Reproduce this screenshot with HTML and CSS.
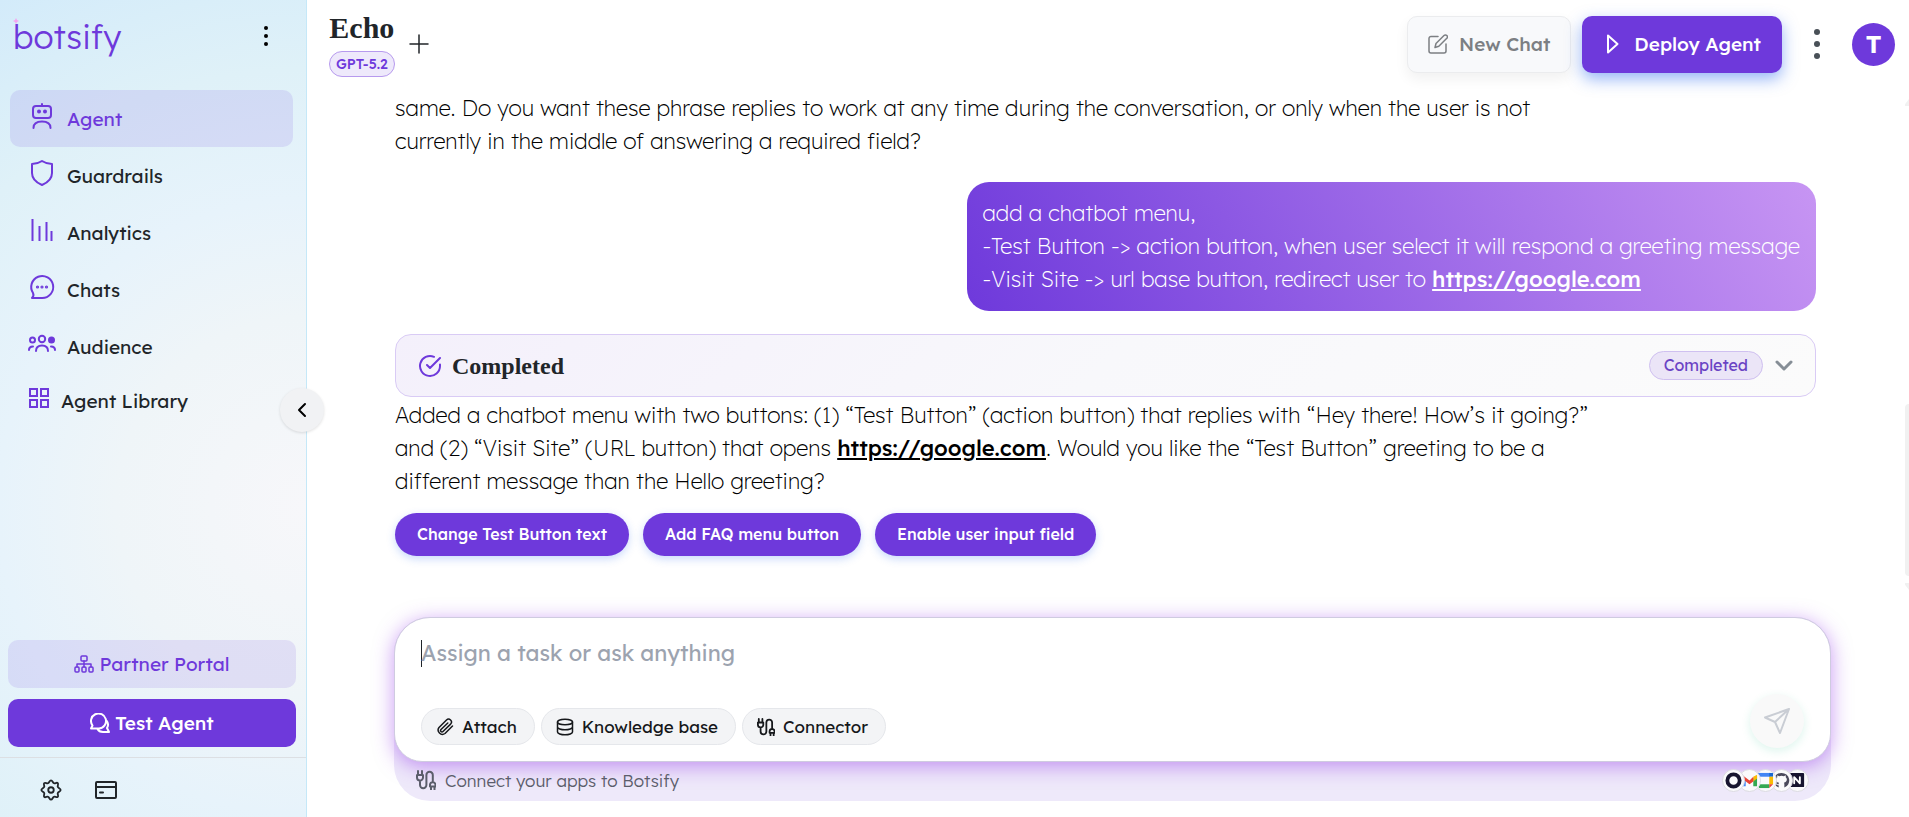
FILE: index.html
```
<!DOCTYPE html>
<html lang="en">
<head>
    <meta charset="UTF-8">
    <meta name="viewport" content="width=device-width, initial-scale=1.0">
    <title>Botsify - Echo</title>
    <link rel="stylesheet" href="styles.css">
</head>
<body>
<svg class="sprite" aria-hidden="true">
    <symbol id="plug" viewBox="0 0 20 20">
        <path d="M2 1v4M6 1v4M1 5h6v2.500a3 3 0 0 1-6 0zM4 10.500V15a3.200 3.200 0 0 0 6.400 0V5a3.200 3.200 0 0 1 6.400 0v6M14 14.500a2.800 2.800 0 0 1 5.500 0v2h-5.500zM15 17v2.500M18.500 17v2.500"/>
    </symbol>
</svg>

<aside class="sidebar">
    <div class="sidebar-top">
        <a href="#" class="logo">botsify
            <svg class="spark" viewBox="0 0 6 6"><path d="M3 0l1 2 2 1-2 1-1 2-1-2-2-1 2-1z"/></svg>
        </a>
        <button class="icon-btn" aria-label="Menu">
            <svg class="dots" width="6" height="20" viewBox="0 0 6 20"><circle cx="3" cy="2" r="2"/><circle cx="3" cy="10" r="2"/><circle cx="3" cy="18" r="2"/></svg>
        </button>
    </div>

    <nav class="nav">
        <a href="#" class="nav-link active">
            <svg width="28" height="28" viewBox="0 0 28 28"><rect x="5" y="4" width="18" height="12" rx="3"/><path d="M14 4V2M5.500 26c0-4 3-6.500 8.500-6.500s8.500 2.500 8.500 6.500"/><circle cx="11" cy="9.500" r="1" class="dot"/><circle cx="17" cy="9.500" r="1" class="dot"/></svg>
            <span>Agent</span>
        </a>
        <a href="#" class="nav-link">
            <svg width="28" height="28" viewBox="0 0 28 28"><path d="M14 2c3 2 6 3 10 3v9c0 6-4 9.500-10 12C8 23.500 4 20 4 14V5c4 0 7-1 10-3z"/></svg>
            <span>Guardrails</span>
        </a>
        <a href="#" class="nav-link">
            <svg class="bars" width="28" height="28" viewBox="0 0 28 28"><path d="M4.500 3v22M11.500 10v15M18.500 6v19M23.500 15v10"/></svg>
            <span>Analytics</span>
        </a>
        <a href="#" class="nav-link">
            <svg width="28" height="28" viewBox="0 0 28 28"><path d="M4 25c1.500-1.500 2-3 1-5A11 11 0 1 1 14 25z"/><circle cx="9.500" cy="14" r=".6" class="dot"/><circle cx="14" cy="14" r=".6" class="dot"/><circle cx="18.500" cy="14" r=".6" class="dot"/></svg>
            <span>Chats</span>
        </a>
        <a href="#" class="nav-link">
            <svg width="28" height="28" viewBox="0 0 28 28"><circle cx="14" cy="9" r="3.200"/><circle cx="4.500" cy="10" r="2.500"/><circle cx="23.500" cy="10" r="2.500" class="dot"/><path d="M8 21c0-3.500 2.500-5.500 6-5.500s6 2 6 5.500M1 20c0-2 1.500-3.500 4-3.500M27 20c0-2-1.500-3.500-4-3.500"/></svg>
            <span>Audience</span>
        </a>
        <a href="#" class="nav-link library">
            <svg class="bars" width="20" height="20" viewBox="0 0 20 20"><path d="M1 1h7v7H1zM12 1h7v7h-7zM1 12h7v7H1zM12 12h7v7h-7z"/></svg>
            <span>Agent Library</span>
        </a>
    </nav>

    <div class="sidebar-actions">
        <button class="btn-side light">
            <svg class="thin" width="20" height="18" viewBox="0 0 20 18"><rect x="7" y="1" width="6" height="5" rx="1"/><rect x="1" y="12" width="4" height="5" rx="1"/><rect x="8" y="12" width="4" height="5" rx="1"/><rect x="15" y="12" width="4" height="5" rx="1"/><path d="M10 6v6M3 12V9h14v3"/></svg>
            Partner Portal
        </button>
        <button class="btn-side solid">
            <svg width="20" height="20" viewBox="0 0 20 20"><path d="M1 15.500l1.500-3A7.500 7.500 0 1 1 9 15.500zM16.500 7.500c2 2.500 2 5 .5 7.500l2 4h-6c-2.500 0-4.500-1-5.500-3"/></svg>
            Test Agent
        </button>
    </div>
    <div class="sidebar-bottom">
        <button class="icon-btn" aria-label="Settings">
            <svg width="22" height="22" viewBox="0 0 24 24"><circle cx="12" cy="12" r="3"/><path d="M12 1.500c1.600 0 1.800 2.600 3.200 3.100s3.100-1.300 4.200-.1-.6 2.900 0 4.200 3.100 1.700 3.100 3.300-2.500 2-3.100 3.300 1.200 3.100 0 4.200-2.800-.6-4.200-.1-1.600 3.100-3.200 3.100-1.800-2.600-3.200-3.100-3.100 1.300-4.200.1.600-2.900 0-4.200-3.100-1.700-3.100-3.300 2.500-2 3.100-3.300-1.200-3.100 0-4.200 2.800.6 4.200.1S10.400 1.500 12 1.500z"/></svg>
        </button>
        <button class="icon-btn" aria-label="Billing">
            <svg width="24" height="22" viewBox="0 0 24 22"><rect x="2" y="3" width="20" height="16" rx="1"/><path d="M2 8h20M6 13.500h3"/></svg>
        </button>
    </div>
    <button class="collapse" aria-label="Collapse sidebar">
        <svg width="10" height="16" viewBox="0 0 10 16"><path d="M8 2L2 8l6 6"/></svg>
    </button>
</aside>

<main class="main">
    <header class="header">
        <div class="agent">
            <h1>Echo</h1>
            <span class="model">GPT-5.2</span>
        </div>
        <button class="icon-btn plus" aria-label="Add">
            <svg class="thin" width="20" height="20" viewBox="0 0 20 20"><path d="M10 1v18M1 10h18"/></svg>
        </button>
        <div class="header-actions">
            <button class="btn new-chat" disabled>
                <svg class="thin" width="20" height="20" viewBox="0 0 20 20"><path d="M10 2.500H3a2 2 0 0 0-2 2V17a2 2 0 0 0 2 2h13a2 2 0 0 0 2-2v-7M7 13.500l1-4 8-8a1.800 1.800 0 0 1 2.800 2.800l-8 8z"/></svg>
                New Chat
            </button>
            <button class="btn deploy">
                <svg width="14" height="20" viewBox="0 0 14 20"><path d="M2 1.500v17L11.500 10z"/></svg>
                Deploy Agent
            </button>
            <button class="icon-btn more" aria-label="More options">
                <svg class="dots" width="6" height="32" viewBox="0 0 6 32"><circle cx="3" cy="4" r="3"/><circle cx="3" cy="16" r="3"/><circle cx="3" cy="28" r="3"/></svg>
            </button>
            <button class="avatar">T</button>
        </div>
    </header>

    <section class="chat">
        <p class="reply">same. Do you want these phrase replies to work at any time during the conversation, or only when the user is not<br>currently in the middle of answering a required field?</p>

        <div class="bubble">add a chatbot menu,<br>-Test Button -&gt; action button, when user select it will respond a greeting message<br>-Visit Site -&gt; url base button, redirect user to <a href="https://google.com">https://google.com</a></div>

        <div class="status-card">
            <svg class="check" width="24" height="24" viewBox="0 0 24 24"><path d="M22 10.500V12A10 10 0 1 1 16 2.800M22 4L12 14l-3-3"/></svg>
            <h2>Completed</h2>
            <span class="badge">Completed</span>
            <button class="icon-btn" aria-label="Expand">
                <svg width="18" height="12" viewBox="0 0 18 12"><path d="M2 2l7 7 7-7"/></svg>
            </button>
        </div>

        <p class="reply">Added a chatbot menu with two buttons: (1) “Test Button” (action button) that replies with “Hey there! How’s it going?”<br>and (2) “Visit Site” (URL button) that opens <a href="https://google.com">https://google.com</a>. Would you like the “Test Button” greeting to be a<br>different message than the Hello greeting?</p>

        <div class="suggestions">
            <button>Change Test Button text</button>
            <button>Add FAQ menu button</button>
            <button>Enable user input field</button>
        </div>

        <div class="scrollbar" aria-hidden="true">
            <span class="arrow up"></span>
            <span class="thumb"></span>
            <span class="arrow down"></span>
        </div>
    </section>

    <div class="tray">
        <form class="composer">
            <textarea rows="1" aria-label="Message" placeholder="Assign a task or ask anything"></textarea>
            <div class="tools">
                <button type="button" class="pill">
                    <svg class="thin" width="18" height="18" viewBox="0 0 18 18"><path d="M16.500 8l-7.500 7.500a4.300 4.300 0 0 1-6-6L10.500 2a2.900 2.900 0 0 1 4.100 4.100L7 13.500a1.400 1.400 0 0 1-2-2L11.800 5"/></svg>
                    Attach
                </button>
                <button type="button" class="pill">
                    <svg class="thin" width="18" height="18" viewBox="0 0 18 18"><ellipse cx="9" cy="4" rx="7.500" ry="2.800"/><path d="M1.500 4v10c0 1.500 3.400 2.800 7.500 2.800s7.500-1.300 7.500-2.800V4M1.500 9c0 1.500 3.400 2.800 7.500 2.800s7.500-1.300 7.500-2.800"/></svg>
                    Knowledge base
                </button>
                <button type="button" class="pill">
                    <svg width="18" height="18"><use href="#plug"/></svg>
                    Connector
                </button>
                <button class="send" aria-label="Send" disabled>
                    <svg width="28" height="28" viewBox="0 0 28 28"><path d="M26 2L2 10.500l10 4.500 5 11zM26 2L12 15"/></svg>
                </button>
            </div>
        </form>
        <div class="connect">
            <svg width="20" height="20"><use href="#plug"/></svg>
            <span>Connect your apps to Botsify</span>
            <div class="apps">
                <span class="app"><svg viewBox="0 0 18 18"><circle cx="9" cy="9" r="6.500" fill="none" stroke="#17152f" stroke-width="4"/></svg></span>
                <span class="app"><svg viewBox="0 0 18 18"><path d="M1 4v11h4V7z" fill="#4285f4"/><path d="M17 4v11h-4V7z" fill="#34a853"/><path d="M13 5l4-2v4l-4 3z" fill="#fbbc04"/><path d="M1 3l8 6 4-4v5l-4 3-8-6z" fill="#ea4335"/></svg></span>
                <span class="app"><svg viewBox="0 0 18 18"><path d="M2 1h12v4H2z" fill="#4285f4"/><path d="M13 1h4v4h-4z" fill="#1967d2"/><path d="M13 5h4v8h-4z" fill="#fbbc04"/><path d="M2 13h11v4H2z" fill="#34a853"/><path d="M13 13h4l-4 4z" fill="#ea4335"/><path d="M1 1h2v12H1z" fill="#4285f4"/></svg></span>
                <span class="app"><svg viewBox="0 0 18 18"><path d="M9 1a8 8 0 0 0-3 15.500V14c-2 .500-2.500-1-3.500-2 2 0 2 1.500 3.500 1 0-1 .500-1.500.500-1.500C2.500 11 3 6.500 4.500 5.500V3.500l2 1a8 8 0 0 1 5 0l2-1v2C15.500 7 15 11 11.500 11.500c.500.500.500 1 .500 2v3A8 8 0 0 0 9 1z" fill="#4b4a5c"/></svg></span>
                <span class="app"><svg viewBox="0 0 18 18"><rect x="1" y="1" width="15" height="15" rx="1" fill="#17152f"/><path d="M5.500 12V5.500l6 6.500V5.500" fill="none" stroke="#fff" stroke-width="2"/></svg></span>
            </div>
        </div>
    </div>
</main>
</body>
</html>
```
FILE: styles.css
```
* {
    box-sizing: border-box;
}
body {
    margin: 0;
    height: 100vh;
    display: flex;
    overflow: hidden;
    background: #fff;
    color: #212529;
    font-family: Lexend, Inter, sans-serif;
}
button, textarea {
    font-family: inherit;
    color: inherit;
}
button {
    cursor: pointer;
}
svg {
    flex: none;
    fill: none;
    stroke: currentColor;
    stroke-width: 2;
    stroke-linecap: round;
    stroke-linejoin: round;
}
svg.thin {
    stroke-width: 1.5;
}
svg.dots {
    fill: currentColor;
    stroke: none;
}
.sprite {
    position: absolute;
    width: 0;
    height: 0;
}
.icon-btn {
    display: flex;
    padding: 0;
    border: none;
    background: none;
}

/* Sidebar */
.sidebar {
    position: relative;
    flex: none;
    width: 307px;
    display: flex;
    flex-direction: column;
    border-right: 1px solid #c5e8f8;
    background: radial-gradient(circle at 100% 62%, #f7f7fa 0%, #eff5f8 32%, #e7f3fb 52%, #dff1f8 74%, #d3ebfa 100%);
}
.sidebar-top {
    display: flex;
    justify-content: space-between;
    align-items: center;
    height: 72px;
    padding: 0 37px 0 13px;
    color: #000;
}
.logo {
    position: relative;
    color: #6e39db;
    font-size: 33px;
    font-weight: 300;
    text-decoration: none;
}
.spark {
    position: absolute;
    left: 0;
    top: 2px;
    width: 6px;
    height: 6px;
    fill: #f5a3f0;
    stroke: none;
}
.nav {
    padding: 18px 13px 0 10px;
}
.nav-link {
    display: flex;
    align-items: center;
    gap: 11px;
    height: 57px;
    padding: 0 18px;
    border-radius: 10px;
    color: #212529;
    font-size: 19px;
    font-weight: 400;
    text-decoration: none;
}
.nav-link svg {
    color: #6e39db;
    margin-bottom: 6px;
}
.nav-link .bars {
    stroke-linecap: butt;
    stroke-linejoin: miter;
}
.nav-link .dot {
    fill: #6e39db;
}
.nav-link.active {
    color: #6e39db;
    background: rgba(110, 57, 219, 0.12);
}
.nav-link.library {
    height: 52px;
    padding-left: 19px;
    gap: 12px;
}
.sidebar-actions {
    margin-top: auto;
    padding: 0 10px 10px 8px;
    display: flex;
    flex-direction: column;
    gap: 11px;
}
.btn-side {
    display: flex;
    justify-content: center;
    align-items: center;
    gap: 5px;
    height: 48px;
    border: none;
    border-radius: 10px;
    font-size: 19px;
}
.btn-side.light {
    color: #6e39db;
    background: rgba(110, 57, 219, 0.12);
    font-weight: 400;
}
.btn-side.solid {
    color: #fff;
    background: #6e39db;
    font-weight: 500;
}
.sidebar-bottom {
    display: flex;
    align-items: center;
    gap: 32px;
    height: 60px;
    padding: 5px 40px 0;
    border-top: 1px solid #dcdfe3;
}
.collapse {
    position: absolute;
    right: -18px;
    top: 388px;
    width: 44px;
    height: 44px;
    display: flex;
    align-items: center;
    justify-content: center;
    border: none;
    border-radius: 50%;
    background: #f1f2f4;
    color: #000;
    box-shadow: 0 1px 3px rgba(0, 0, 0, 0.12);
}

/* Header */
.main {
    flex: 1;
    min-width: 0;
    display: flex;
    flex-direction: column;
}
.header {
    display: flex;
    align-items: center;
    flex: none;
    height: 88px;
    padding: 0 14px 0 22px;
}
.agent {
    display: flex;
    flex-direction: column;
    align-items: center;
    gap: 7px;
}
h1, h2 {
    margin: 0;
    font-family: "Liberation Serif", serif;
    font-weight: 700;
}
h1 {
    font-size: 30px;
    line-height: 32px;
}
.model {
    padding: 0 6px;
    border: 1px solid #b79aee;
    border-radius: 13px;
    background: #eee9fb;
    color: #6e39db;
    font-size: 14px;
    font-weight: 500;
    line-height: 24px;
}
.plus {
    margin-left: 14px;
}
.header-actions {
    display: flex;
    align-items: center;
    margin-left: auto;
}
.btn {
    display: flex;
    align-items: center;
    height: 57px;
    border-radius: 10px;
    font-size: 19px;
    font-weight: 500;
}
.new-chat {
    gap: 11px;
    padding: 0 20px;
    margin-right: 11px;
    border: 1px solid #ebecee;
    background: #f8f9fb;
    color: #7c7f83;
    box-shadow: 0 6px 14px rgba(0, 0, 0, 0.06);
}
.deploy {
    gap: 14px;
    padding: 0 21px 0 24px;
    border: none;
    background: #6e39db;
    color: #fff;
    box-shadow: 0 6px 16px rgba(45, 107, 240, 0.5);
}
.more {
    margin: 0 32px;
    color: #495057;
}
.avatar {
    width: 43px;
    height: 43px;
    padding: 0;
    border: none;
    border-radius: 50%;
    background: #6e39db;
    color: #fff;
    font-size: 24px;
    font-weight: 700;
}

/* Conversation */
.chat {
    position: relative;
    flex: 1;
    display: flex;
    flex-direction: column;
    align-items: flex-start;
    padding: 4px 93px 0 88px;
}
.reply, .bubble {
    margin: 0;
    color: #000;
    font-size: 22px;
    font-weight: 200;
    line-height: 33px;
}
.reply a, .bubble a {
    color: inherit;
    font-weight: 500;
}
.bubble {
    align-self: flex-end;
    margin: 24px 0 23px;
    padding: 15px 16px;
    border-radius: 22px;
    color: #fff;
    background: linear-gradient(60deg, #6e39db, #c795f3);
}
.status-card {
    align-self: stretch;
    display: flex;
    align-items: center;
    height: 63px;
    margin-bottom: 2px;
    padding: 0 22px;
    border: 1px solid #d9cbf5;
    border-radius: 16px;
    background: linear-gradient(135deg, #f4f0fb, #f8f8fb 50%, #fbfbfb);
}
.check {
    margin-right: 10px;
    color: #6e39db;
}
h2 {
    font-size: 24px;
    line-height: 30px;
}
.badge {
    margin-left: auto;
    margin-right: 12px;
    padding: 0 14px;
    border: 1px solid #cfc0f0;
    border-radius: 15px;
    background: #ebe5f7;
    color: #6a43c4;
    font-size: 16px;
    font-weight: 400;
    line-height: 27px;
}
.status-card .icon-btn {
    color: #868e96;
}
.status-card .icon-btn svg {
    stroke-width: 3;
}
.suggestions {
    display: flex;
    gap: 14px;
    margin-top: 15px;
}
.suggestions button {
    height: 43px;
    padding: 0 22px 2px;
    border: none;
    border-radius: 22px;
    background: #6e39db;
    color: #fff;
    font-size: 16px;
    font-weight: 500;
    box-shadow: 0 3px 8px rgba(45, 107, 240, 0.25);
}
.scrollbar {
    position: absolute;
    right: 0;
    top: 11px;
    bottom: 27px;
    width: 4px;
    display: flex;
    flex-direction: column;
}
.thumb {
    height: 35%;
    margin-bottom: 7px;
    border-radius: 4px 0 0 4px;
    background: #f1f1f1;
}
.arrow {
    height: 7px;
    background: #f1f1f1;
}
.arrow.up {
    margin-bottom: auto;
    clip-path: polygon(0 75%, 100% 0, 100% 100%, 0 100%);
}
.arrow.down {
    clip-path: polygon(0 0, 100% 0, 100% 100%, 0 25%);
}

/* Message box */
.tray {
    flex: none;
    margin: 0 78px 16px 87px;
    border-radius: 36px;
    background: #eee9fa;
}
.composer {
    display: flex;
    flex-direction: column;
    gap: 23px;
    height: 145px;
    padding: 17px 26px 0;
    border: 1px solid #cfcbe0;
    border-radius: 36px 36px 28px 28px;
    background: #fff;
    box-shadow: 0 4px 20px rgba(147, 51, 234, 0.5);
}
textarea {
    display: block;
    width: 100%;
    height: 36px;
    padding: 0;
    border: none;
    outline: none;
    resize: none;
    background: none;
    font-size: 22px;
    font-weight: 400;
    line-height: 36px;
}
textarea::placeholder {
    color: #9ca3af;
}
/* static cursor while the box is empty */
textarea:placeholder-shown {
    caret-color: transparent;
    background: linear-gradient(#212529, #212529) 0 50% / 1px 27px no-repeat;
}
.tools {
    display: flex;
    align-items: flex-end;
    gap: 6px;
    height: 54px;
}
.pill {
    display: flex;
    align-items: center;
    gap: 8px;
    height: 37px;
    margin-bottom: 3px;
    padding: 0 17px 0 14px;
    border: 1px solid #e5e7eb;
    border-radius: 19px;
    background: #f3f4f6;
    color: #16181b;
    font-size: 17px;
    font-weight: 400;
}
.send {
    display: flex;
    align-items: center;
    justify-content: center;
    width: 54px;
    height: 54px;
    margin-left: auto;
    padding: 0;
    border: none;
    border-radius: 50%;
    background: #f9f9f9;
    color: #c9cdd4;
    box-shadow: 0 3px 10px rgba(16, 185, 129, 0.14);
}
.connect {
    display: flex;
    align-items: center;
    gap: 9px;
    height: 39px;
    padding: 0 22px 3px;
    color: #5b5d6b;
    font-size: 17px;
    font-weight: 300;
}
.apps {
    display: flex;
    margin-left: auto;
}
.app {
    display: flex;
    width: 23px;
    height: 23px;
    margin-left: -7px;
    padding: 2px;
    border: 1px solid #dcdbe2;
    border-radius: 50%;
    background: #fafafc;
}
/* each app overlaps the one after it */
.app:nth-child(1) { z-index: 5; }
.app:nth-child(2) { z-index: 4; }
.app:nth-child(3) { z-index: 3; }
.app:nth-child(4) { z-index: 2; }
.app svg {
    width: 100%;
    height: 100%;
    stroke: none;
}
```
